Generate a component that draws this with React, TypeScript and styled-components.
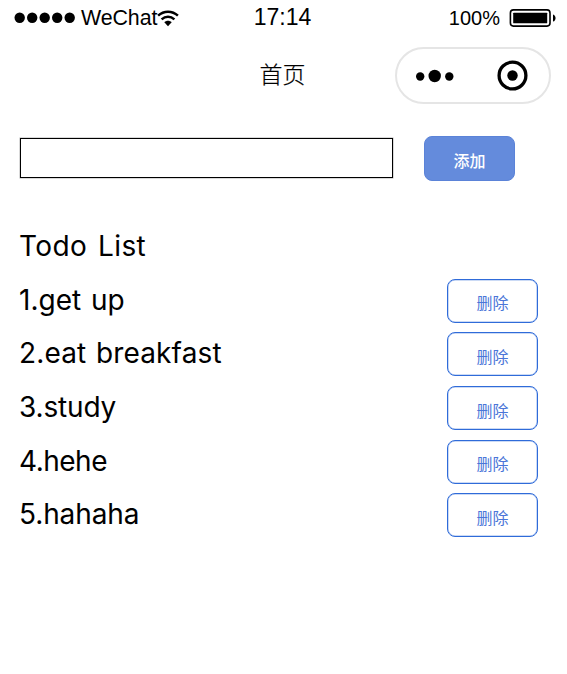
import React from 'react';
import styled, { createGlobalStyle } from 'styled-components';

const GlobalStyle = createGlobalStyle`
  * { box-sizing: border-box; }
  body {
    margin: 0;
    background: #fff;
    color: #000;
    font-family: Inter, "Noto Sans CJK SC", sans-serif;
  }
`;

const Screen = styled.main`
  width: 567px;
  height: 674px;
  overflow: hidden;
  background: #fff;
`;

const StatusBar = styled.header`
  display: grid;
  grid-template-columns: 1fr auto 1fr;
  align-items: center;
  height: 36px;
  padding: 0 10px 0 14px;
  font-family: "Liberation Sans", Arial, sans-serif;
`;

const Carrier = styled.div`
  display: flex;
  align-items: center;
`;

const CarrierName = styled.span`
  margin-left: 5px;
  font-size: 21.4px;
  line-height: 36px;
  letter-spacing: -0.1px;
`;

const Time = styled.time`
  margin-right: 6px;
  font-size: 23px;
  line-height: 34px;
  padding-bottom: 2px;
`;

const Power = styled.div`
  display: flex;
  justify-content: flex-end;
  align-items: center;
  gap: 9px;
  font-size: 20px;
  line-height: 36px;
`;

const NavBar = styled.nav`
  display: grid;
  grid-template-columns: 1fr auto 1fr;
  align-items: center;
  height: 78px;
  padding: 0 16px 0 14px;
`;

const PageTitle = styled.h1`
  grid-column: 2;
  margin: 0;
  font-size: 23px;
  font-weight: 300;
  line-height: 30px;
  -webkit-text-stroke: 0.2px #000;
`;

const Capsule = styled.div`
  justify-self: end;
  display: flex;
  align-items: center;
  justify-content: space-between;
  width: 156px;
  height: 57px;
  padding: 1px 21px 0 19px;
  border: 2px solid #e5e5e5;
  border-radius: 29px;
`;

const AddForm = styled.section`
  display: flex;
  align-items: flex-start;
  gap: 31px;
  padding: 22px 0 0 20px;
`;

const TodoInput = styled.input`
  width: 373px;
  height: 40px;
  margin: 2px 0 3px;
  padding: 0 8px;
  border: 1px solid #000;
  border-radius: 0;
  background: #fff;
  box-shadow: 0 0 0 0.5px rgba(0, 0, 0, 0.3);
  font-size: 24px;
  outline: none;
`;

const Button = styled.button<{ $filled?: boolean }>`
  flex: none;
  width: 91px;
  height: ${(p) => (p.$filled ? 45 : 44)}px;
  margin-top: ${(p) => (p.$filled ? 0 : 2)}px;
  padding: 3px 0 0;
  border: 1px solid ${(p) => (p.$filled ? '#5b83d8' : '#2f6bd9')};
  border-radius: 8px;
  background: ${(p) => (p.$filled ? '#648bdc' : '#fff')};
  box-shadow: ${(p) => (p.$filled ? 'none' : 'inset 0 0 0 0.5px rgba(47, 107, 217, 0.5)')};
  color: ${(p) => (p.$filled ? '#fff' : '#4a76d8')};
  font-family: "Noto Sans CJK SC", sans-serif;
  font-size: 16px;
  font-weight: ${(p) => (p.$filled ? 500 : 400)};
  line-height: 20px;
`;

const List = styled.section`
  padding: 38.4px 29px 0 19px;
`;

const Row = styled.div`
  display: flex;
  align-items: center;
  justify-content: space-between;
  height: 53.65px;
`;

const Label = styled.span<{ $tracking: number; $gap?: number }>`
  font-size: 28px;
  line-height: 40px;
  white-space: pre;
  letter-spacing: ${(p) => p.$tracking}px;
  word-spacing: ${(p) => p.$gap ?? 0}px;
`;

const todos = [
  { text: '1.get up', tracking: 0, gap: 2 },
  { text: '2.eat breakfast', tracking: 0.15, gap: 1.5 },
  { text: '3.study', tracking: -0.15 },
  { text: '4.hehe', tracking: -0.5 },
  { text: '5.hahaha', tracking: -0.1 },
];

const SignalDots = () => (
  <svg width="62" height="12" viewBox="0 0 62 12">
    {[5.7, 18.2, 30.7, 43.2, 55.7].map((x) => (
      <circle key={x} cx={x} cy="5.7" r="5.2" />
    ))}
  </svg>
);

const WifiIcon = () => (
  <svg width="22" height="18" viewBox="0 0 22 18" fill="none" stroke="#000" strokeWidth="2.5">
    <path d="M1.1 6.6C6.8 1.4 15.2 1.4 20.9 6.6" />
    <path d="M4.6 10.4C8.4 7 13.6 7 17.4 10.4" />
    <path d="M7.3 13.3C9.4 11.3 12.6 11.3 14.7 13.3L11 17.2Z" fill="#000" stroke="none" />
  </svg>
);

const BatteryIcon = () => (
  <svg width="48" height="18" viewBox="0 0 48 18">
    <rect x="1.4" y=".9" width="39.6" height="16.2" rx="3" fill="none" stroke="#000" strokeWidth="1.6" />
    <rect x="4.2" y="3.7" width="34" height="10.6" rx="0.6" />
    <path d="M44 5.4C47.4 6.4 47.4 11.6 44 12.6Z" />
  </svg>
);

const MoreIcon = () => (
  <svg width="39" height="14" viewBox="0 0 39 14">
    <circle cx="4.2" cy="7.5" r="4.2" />
    <circle cx="18.7" cy="7" r="6.2" />
    <circle cx="33.3" cy="7.5" r="4.2" />
  </svg>
);

const CloseIcon = () => (
  <svg width="31" height="31" viewBox="0 0 31 31">
    <circle cx="15.5" cy="15.5" r="13.4" fill="none" stroke="#000" strokeWidth="3.3" />
    <circle cx="15.5" cy="15.5" r="5.2" />
  </svg>
);

export default function App() {
  return (
    <>
      <GlobalStyle />
      <Screen>
        <StatusBar>
          <Carrier>
            <SignalDots />
            <CarrierName>WeChat</CarrierName>
            <WifiIcon />
          </Carrier>
          <Time>17:14</Time>
          <Power>
            <span>100%</span>
            <BatteryIcon />
          </Power>
        </StatusBar>
        <NavBar>
          <PageTitle>首页</PageTitle>
          <Capsule>
            <MoreIcon />
            <CloseIcon />
          </Capsule>
        </NavBar>
        <AddForm>
          <TodoInput aria-label="Todo" />
          <Button $filled>添加</Button>
        </AddForm>
        <List>
          <Row>
            <Label $tracking={0.4} $gap={2.5}>Todo List</Label>
          </Row>
          {todos.map((todo) => (
            <Row key={todo.text}>
              <Label $tracking={todo.tracking} $gap={todo.gap}>{todo.text}</Label>
              <Button>删除</Button>
            </Row>
          ))}
        </List>
      </Screen>
    </>
  );
}
